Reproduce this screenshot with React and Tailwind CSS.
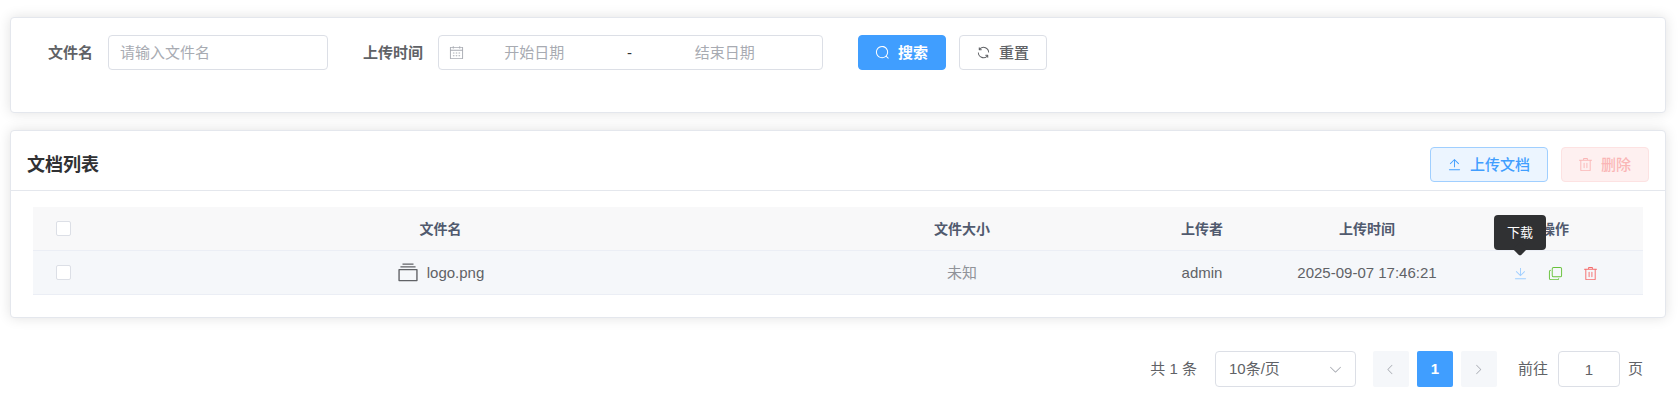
import React, { useState } from "react";

const paths = {
  search:
    "m795.904 750.72 124.992 124.928a32 32 0 0 1-45.248 45.248L750.656 795.904a416 416 0 1 1 45.248-45.248zM480 832a352 352 0 1 0 0-704 352 352 0 0 0 0 704",
  refresh:
    "M771.776 794.88A384 384 0 0 1 128 512h64a320 320 0 0 0 555.712 216.448H654.72a32 32 0 1 1 0-64h149.056a32 32 0 0 1 32 32v148.928a32 32 0 1 1-64 0v-50.56zM276.288 295.616h92.992a32 32 0 0 1 0 64H220.16a32 32 0 0 1-32-32V178.56a32 32 0 0 1 64 0v50.56A384 384 0 0 1 896.128 512h-64a320 320 0 0 0-555.776-216.384z",
  trash:
    "M160 256H96a32 32 0 0 1 0-64h256V95.936a32 32 0 0 1 32-32h256a32 32 0 0 1 32 32V192h256a32 32 0 1 1 0 64h-64v672a32 32 0 0 1-32 32H192a32 32 0 0 1-32-32zm448-64v-64H416v64zM224 896h576V256H224zm192-128a32 32 0 0 1-32-32V416a32 32 0 0 1 64 0v320a32 32 0 0 1-32 32m192 0a32 32 0 0 1-32-32V416a32 32 0 0 1 64 0v320a32 32 0 0 1-32 32",
  download:
    "M160 832h704a32 32 0 1 1 0 64H160a32 32 0 1 1 0-64m384-253.696 236.288-236.352 45.248 45.248L508.8 704 192 387.2l45.248-45.248L480 584.704V128h64z",
  upload:
    "M160 832h704a32 32 0 1 1 0 64H160a32 32 0 1 1 0-64m384-578.304V704h-64V247.296L237.248 490.048 192 444.8 508.8 128l316.8 316.8-45.312 45.248z",
  copy:
    "M768 832a128 128 0 0 1-128 128H192A128 128 0 0 1 64 832V384a128 128 0 0 1 128-128v64a64 64 0 0 0-64 64v448a64 64 0 0 0 64 64h448a64 64 0 0 0 64-64zM384 128a64 64 0 0 0-64 64v448a64 64 0 0 0 64 64h448a64 64 0 0 0 64-64V192a64 64 0 0 0-64-64zm0-64h448a128 128 0 0 1 128 128v448a128 128 0 0 1-128 128H384a128 128 0 0 1-128-128V192A128 128 0 0 1 384 64",
  calendar:
    "M128 384v512h768V192H768v32a32 32 0 1 1-64 0v-32H320v32a32 32 0 0 1-64 0v-32H128v128h768v64zm192-256h384V96a32 32 0 1 1 64 0v32h160a32 32 0 0 1 32 32v768a32 32 0 0 1-32 32H96a32 32 0 0 1-32-32V160a32 32 0 0 1 32-32h160V96a32 32 0 0 1 64 0zm-32 384h64a32 32 0 0 1 0 64h-64a32 32 0 0 1 0-64m0 192h64a32 32 0 1 1 0 64h-64a32 32 0 1 1 0-64m192-192h64a32 32 0 0 1 0 64h-64a32 32 0 0 1 0-64m0 192h64a32 32 0 1 1 0 64h-64a32 32 0 1 1 0-64m192-192h64a32 32 0 1 1 0 64h-64a32 32 0 1 1 0-64m0 192h64a32 32 0 1 1 0 64h-64a32 32 0 1 1 0-64",
  down:
    "M831.872 340.864 512 652.672 192.128 340.864a30.592 30.592 0 0 0-42.752 0 29.12 29.12 0 0 0 0 41.6L489.664 714.24a32 32 0 0 0 44.672 0l340.288-331.712a29.12 29.12 0 0 0 0-41.728 30.592 30.592 0 0 0-42.752 0z",
  left:
    "M609.408 149.376 277.76 489.6a32 32 0 0 0 0 44.672l331.648 340.352a29.12 29.12 0 0 0 41.728 0 30.592 30.592 0 0 0 0-42.752L339.264 511.936l311.872-319.872a30.592 30.592 0 0 0 0-42.688 29.12 29.12 0 0 0-41.728 0",
  right:
    "M340.864 149.312a30.592 30.592 0 0 0 0 42.752L652.736 512 340.864 831.872a30.592 30.592 0 0 0 0 42.752 29.12 29.12 0 0 0 41.728 0L714.24 534.336a32 32 0 0 0 0-44.672L382.592 149.376a29.12 29.12 0 0 0-41.728 0z",
  files:
    "M128 384v448h768V384zm-32-64h832a32 32 0 0 1 32 32v512a32 32 0 0 1-32 32H96a32 32 0 0 1-32-32V352a32 32 0 0 1 32-32m64-128h704v64H160zm96-128h512v64H256z",
};

function Icon({ name, className = "size-[15px]" }) {
  return (
    <svg viewBox="0 0 1024 1024" fill="currentColor" aria-hidden="true" className={`shrink-0 ${className}`}>
      <path d={paths[name]} />
    </svg>
  );
}

function Button({ icon, className, children, ...rest }) {
  return (
    <button
      type="button"
      className={`flex h-[35px] items-center gap-2 rounded border pr-[17px] pl-4 whitespace-nowrap ${className}`}
      {...rest}
    >
      <Icon name={icon} />
      {children}
    </button>
  );
}

function Checkbox({ label }) {
  return (
    <input
      type="checkbox"
      aria-label={label}
      className="block size-[15px] appearance-none rounded-xs border border-[#dcdfe6] bg-white checked:border-[#409eff] checked:bg-[#409eff]"
    />
  );
}

const card = "rounded border border-[#e4e7ed] bg-white shadow-[0_0_13px_rgba(0,0,0,0.12)]";
const placeholder = "placeholder:text-[#a8abb2] placeholder:opacity-100";

function SearchCard() {
  return (
    <section className={`${card} pt-[17px] pb-[42px] pl-[37px]`}>
      <form className="flex flex-wrap items-center gap-x-[35px]">
        <div className="flex items-center gap-[15px]">
          <label htmlFor="file-name" className="font-bold">文件名</label>
          <input
            id="file-name"
            type="text"
            placeholder="请输入文件名"
            className={`h-[35px] w-[220px] rounded border border-[#dcdfe6] px-[11px] outline-none ${placeholder}`}
          />
        </div>
        <div className="flex items-center gap-[15px]">
          <label htmlFor="start-date" className="font-bold">上传时间</label>
          <div className="flex h-[35px] w-[385px] items-center rounded border border-[#dcdfe6] pr-[27px] pl-[10px] text-[#a8abb2]">
            <Icon name="calendar" />
            <input
              id="start-date"
              type="text"
              placeholder="开始日期"
              className={`min-w-0 flex-1 text-center text-[#606266] outline-none ${placeholder}`}
            />
            <span className="w-[50px] text-center text-[#303133]">-</span>
            <input
              type="text"
              aria-label="结束日期"
              placeholder="结束日期"
              className={`min-w-0 flex-1 text-center text-[#606266] outline-none ${placeholder}`}
            />
          </div>
        </div>
        <div className="flex gap-[13px]">
          <Button icon="search" className="border-[#409eff] bg-[#409eff] font-bold text-white">搜索</Button>
          <Button icon="refresh" className="border-[#dcdfe6] bg-white font-medium">重置</Button>
        </div>
      </form>
    </section>
  );
}

const headers = ["文件名", "文件大小", "上传者", "上传时间", "操作"];
const cell = "border-b border-[#ebeef5] p-0";

function DocumentTable() {
  return (
    <table className="w-full table-fixed border-separate border-spacing-0 text-center">
      <colgroup>
        <col className="w-[61px]" />
        <col />
        <col className="w-[350px]" />
        <col className="w-[130px]" />
        <col className="w-[200px]" />
        <col className="w-[176px]" />
      </colgroup>
      <thead>
        <tr className="h-11 bg-[#f8f8f9] text-sm text-[#515a6e]">
          <th className={`${cell} pl-[23px]`}>
            <Checkbox label="全选" />
          </th>
          {headers.map((h) => (
            <th key={h} scope="col" className={`${cell} font-bold`}>{h}</th>
          ))}
        </tr>
      </thead>
      <tbody>
        <tr className="h-11 bg-[#f5f7fa]">
          <td className={`${cell} pl-[23px]`}>
            <Checkbox label="选择 logo.png" />
          </td>
          <td className={cell}>
            <div className="flex items-center justify-center gap-2">
              <Icon name="files" className="size-[22px]" />
              <span>logo.png</span>
            </div>
          </td>
          <td className={`${cell} text-[#909399]`}>未知</td>
          <td className={cell}>admin</td>
          <td className={cell}>2025-09-07 17:46:21</td>
          <td className={cell}>
            <div className="flex items-center justify-center gap-5 pt-0.5">
              <div className="relative">
                <button type="button" aria-label="下载" aria-describedby="download-tip" className="block text-[#a0cfff]">
                  <Icon name="download" />
                </button>
                <div
                  id="download-tip"
                  role="tooltip"
                  className="absolute bottom-full left-1/2 mb-4 flex h-[35px] -translate-x-1/2 items-center rounded bg-[#303133] px-[13px] text-[13px] whitespace-nowrap text-white"
                >
                  下载
                  <span className="absolute -bottom-1 left-1/2 size-[10px] -translate-x-1/2 rotate-45 rounded-br-xs bg-[#303133]" />
                </div>
              </div>
              <button type="button" aria-label="复制" className="block text-[#67c23a]">
                <Icon name="copy" />
              </button>
              <button type="button" aria-label="删除" className="block text-[#f56c6c]">
                <Icon name="trash" />
              </button>
            </div>
          </td>
        </tr>
      </tbody>
    </table>
  );
}

function DocumentCard() {
  return (
    <section className={card}>
      <header className="flex items-center justify-between border-b border-[#e4e7ed] px-4 pt-4 pb-2">
        <h2 className="text-lg font-bold text-[#303133]">文档列表</h2>
        <div className="flex gap-[13px]">
          <Button icon="upload" className="border-[#a0cfff] bg-[#ecf5ff] font-medium text-[#409eff]">上传文档</Button>
          <Button icon="trash" disabled className="border-[#fde2e2] bg-[#fef0f0] font-medium text-[#fab6b6]">删除</Button>
        </div>
      </header>
      <div className="px-[22px] pt-4 pb-[22px]">
        <DocumentTable />
      </div>
    </section>
  );
}

function Pagination() {
  const [page, setPage] = useState("1");
  return (
    <nav aria-label="分页" className="mt-4 flex items-center justify-end pr-[23px]">
      <span className="mr-[18px]">共 1 条</span>
      <div className="relative mr-[17px]">
        <select
          aria-label="每页条数"
          className="h-9 w-[141px] appearance-none rounded border border-[#dcdfe6] bg-white px-[13px] outline-none"
        >
          <option>10条/页</option>
          <option>20条/页</option>
        </select>
        <Icon name="down" className="pointer-events-none absolute top-[11px] right-[13px] size-[15px] text-[#a8abb2]" />
      </div>
      <div className="flex gap-2">
        <button type="button" disabled aria-label="上一页" className="flex size-9 items-center justify-center rounded-xs bg-[#f5f7fa] text-[#a8abb2]">
          <Icon name="left" className="size-[13px]" />
        </button>
        <button type="button" aria-current="page" className="size-9 rounded-xs bg-[#409eff] font-bold text-white">1</button>
        <button type="button" disabled aria-label="下一页" className="flex size-9 items-center justify-center rounded-xs bg-[#f5f7fa] text-[#a8abb2]">
          <Icon name="right" className="size-[13px]" />
        </button>
      </div>
      <label htmlFor="goto" className="ml-[21px]">前往</label>
      <input
        id="goto"
        type="text"
        value={page}
        onChange={(e) => setPage(e.target.value)}
        className="mr-2 ml-[10px] h-9 w-[62px] rounded border border-[#dcdfe6] text-center outline-none"
      />
      <span>页</span>
    </nav>
  );
}

export default function App() {
  return (
    <main className="flex flex-col gap-[17px] bg-white pt-[17px] pr-3 pb-4 pl-[10px] font-['Liberation_Sans','Noto_Sans_CJK_SC',sans-serif] text-[15px] leading-5 text-[#606266]">
      <SearchCard />
      <DocumentCard />
      <Pagination />
    </main>
  );
}
